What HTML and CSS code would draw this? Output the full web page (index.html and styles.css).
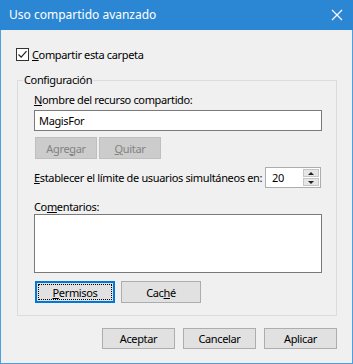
FILE: index.html
```html
<!DOCTYPE html>
<html lang="es">
<head>
    <meta charset="UTF-8">
    <meta name="viewport" content="width=device-width, initial-scale=1.0">
    <title>Uso compartido avanzado</title>
    <link rel="stylesheet" href="styles.css">
</head>
<body>
    <div class="window">
        <div class="titlebar">
            <span class="title">Uso compartido avanzado</span>
            <svg class="close" width="12" height="12" viewBox="0 0 12 12">
                <path d="M1 1 L11 11 M11 1 L1 11" stroke="#fff" stroke-width="1.2" fill="none"/>
            </svg>
        </div>

        <div class="content">
            <label class="check-row">
                <span class="checkbox">
                    <svg width="11" height="11" viewBox="0 0 11 11">
                        <path d="M1.5 5.5 L4.2 8.2 L9.5 2.2" stroke="#222" stroke-width="1.2" fill="none"/>
                    </svg>
                </span>
                <span><u>C</u>ompartir esta carpeta</span>
            </label>

            <fieldset class="group">
                <legend>Configuración</legend>

                <div class="label"><u>N</u>ombre del recurso compartido:</div>
                <div class="textbox">MagisFor</div>

                <div class="btn-row small">
                    <button class="btn disabled">Agre<u>g</u>ar</button>
                    <button class="btn disabled"><u>Q</u>uitar</button>
                </div>

                <div class="limit-row">
                    <span class="limit-label"><u>E</u>stablecer el límite de usuarios simultáneos en:</span>
                    <div class="spinner">
                        <span class="spin-value">20</span>
                        <div class="spin-btns">
                            <div class="spin-btn"><span class="arrow-up"></span></div>
                            <div class="spin-btn"><span class="arrow-down"></span></div>
                        </div>
                    </div>
                </div>

                <div class="label comments-label">Co<u>m</u>entarios:</div>
                <div class="textarea"></div>

                <div class="btn-row wide">
                    <button class="btn focused"><span class="focus-ring"><u>P</u>ermisos</span></button>
                    <button class="btn">Cac<u>h</u>é</button>
                </div>
            </fieldset>

            <div class="footer">
                <button class="btn">Aceptar</button>
                <button class="btn">Cancelar</button>
                <button class="btn">Aplicar</button>
            </div>
        </div>
    </div>
</body>
</html>
```

FILE: styles.css
```css
body {
    margin: 0;
    font-family: "Noto Sans", "Liberation Sans", sans-serif;
    font-size: 11px;
    letter-spacing: -0.35px;
    color: #000;
    background: #fff;
}

.window {
    width: 353px;
    height: 364px;
    box-sizing: border-box;
    border: 1px solid #4b9fe1;
    border-top: none;
    background-color: #f0f0f0;
}

.titlebar {
    height: 30px;
    margin: 0 -1px;
    background-color: #2b87d4;
    display: flex;
    align-items: center;
    justify-content: space-between;
    padding: 0 10px 0 9px;
    color: #fff;
}

.title {
    font-size: 12px;
    letter-spacing: 0;
    margin-top: -1px;
}

.close {
    display: block;
}

.content {
    padding: 0 15px 0 15px;
}

.check-row {
    display: flex;
    align-items: center;
    height: 15px;
    margin-top: 17px;
    gap: 3px;
}

.checkbox {
    width: 13px;
    height: 13px;
    box-sizing: border-box;
    border: 1px solid #333;
    background-color: #fff;
    display: flex;
    align-items: center;
    justify-content: center;
}

.checkbox svg {
    display: block;
}

.group {
    margin: 10px 0 0 1px;
    padding: 4px 14px 12px 16px;
    width: 320px;
    box-sizing: border-box;
    border: 1px solid #dcdcdc;
    min-inline-size: 0;
}

.group legend {
    padding: 0 1px;
    margin-left: -11px;
    line-height: 16px;
}

.label {
    line-height: 15px;
}

.textbox {
    margin-top: 3px;
    height: 21px;
    width: 288px;
    box-sizing: border-box;
    border: 1px solid #7a7a7a;
    background-color: #fff;
    padding: 0 4px;
    line-height: 19px;
}

.btn-row {
    display: flex;
}

.btn {
    font-family: inherit;
    font-size: 11px;
    letter-spacing: inherit;
    color: #000;
    height: 21px;
    box-sizing: border-box;
    border: 1px solid #adadad;
    background-color: #e1e1e1;
    padding: 0;
    display: flex;
    align-items: center;
    justify-content: center;
}

.btn-row.small {
    margin: 6px 0 0 1px;
    gap: 2px;
}

.btn-row.small .btn {
    width: 62px;
    height: 22px;
}

.btn.disabled {
    background-color: #cccccc;
    border-color: #bfbfbf;
    color: #838383;
}

.limit-row {
    margin-top: 8px;
    display: flex;
    align-items: center;
    justify-content: space-between;
    width: 287px;
}

.limit-label {
    white-space: nowrap;
}

.spinner {
    width: 56px;
    height: 21px;
    box-sizing: border-box;
    border: 1px solid #abadb3;
    background-color: #fff;
    display: flex;
    justify-content: space-between;
}

.spin-value {
    padding-left: 6px;
    line-height: 19px;
}

.spin-btns {
    width: 16px;
    display: flex;
    flex-direction: column;
    gap: 1px;
    padding: 1px 1px 1px 0;
}

.spin-btn {
    flex: 1;
    background-color: #e6e6e6;
    border: 1px solid #c5c5c5;
    display: flex;
    align-items: center;
    justify-content: center;
}

.arrow-up {
    width: 0;
    height: 0;
    border-left: 3px solid transparent;
    border-right: 3px solid transparent;
    border-bottom: 3px solid #222;
}

.arrow-down {
    width: 0;
    height: 0;
    border-left: 3px solid transparent;
    border-right: 3px solid transparent;
    border-top: 3px solid #222;
}

.comments-label {
    margin-top: 12px;
    line-height: 14px;
}

.textarea {
    margin-top: 0;
    width: 288px;
    height: 59px;
    box-sizing: border-box;
    border: 1px solid #7a7a7a;
    background-color: #fff;
}

.btn-row.wide {
    margin: 8px 0 0 1px;
    gap: 6px;
}

.btn-row.wide .btn {
    width: 80px;
    height: 22px;
}

.btn.focused {
    border: 2px solid #0078d7;
    padding: 1px;
}

.focus-ring {
    flex: 1;
    align-self: stretch;
    display: flex;
    align-items: center;
    justify-content: center;
    outline: 1px dotted #000;
    outline-offset: -1px;
}

.footer {
    display: flex;
    justify-content: flex-end;
    gap: 8px;
    margin-top: 12px;
    padding-right: 0;
}

.footer .btn {
    width: 73px;
}
```
